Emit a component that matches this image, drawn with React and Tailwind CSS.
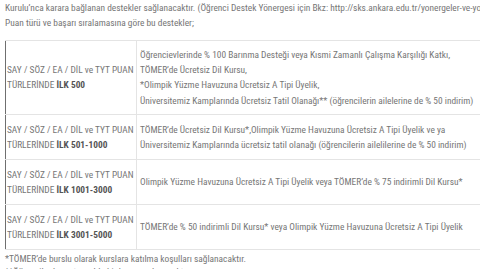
const rows = [
  {
    rank: "İLK 500",
    lines: [
      "Öğrencievlerinde % 100 Barınma Desteği veya Kısmi Zamanlı Çalışma Karşılığı Katkı,",
      "TÖMER’de Ücretsiz Dil Kursu,",
      "*Olimpik Yüzme Havuzuna Ücretsiz A Tipi Üyelik,",
      "Üniversitemiz Kamplarında Ücretsiz Tatil Olanağı** (öğrencilerin ailelerine de % 50 indirim)",
    ],
  },
  {
    rank: "İLK 501-1000",
    lines: [
      "TÖMER’de Ücretsiz Dil Kursu*,Olimpik Yüzme Havuzuna Ücretsiz A Tipi Üyelik ve ya",
      "Üniversitemiz Kamplarında ücretsiz tatil olanağı (öğrencilerin ailelilerine de % 50 indirim)",
    ],
  },
  {
    rank: "İLK 1001-3000",
    lines: [
      "Olimpik Yüzme Havuzuna Ücretsiz A Tipi Üyelik veya TÖMER’de % 75 indirimli Dil Kursu*",
    ],
  },
  {
    rank: "İLK 3001-5000",
    lines: [
      "TÖMER’de % 50 indirimli Dil Kursu* veya Olimpik Yüzme Havuzuna Ücretsiz A Tipi Üyelik",
    ],
  },
];

export default function App() {
  return (
    <div className="w-[480px] h-[269px] overflow-hidden bg-white">
      <div
        className="w-[700px] pl-[5px] text-[9.4px] leading-[15px] text-[#767676]"
        style={{ fontFamily: '"Roboto Condensed", Roboto, sans-serif' }}
      >
        <p className="h-[15px] whitespace-nowrap">
          Kurulu’nca karara bağlanan destekler sağlanacaktır. (Öğrenci Destek Yönergesi için Bkz: http://sks.ankara.edu.tr/yonergeler-ve-yonetmelikler)
        </p>
        <p className="h-[15px] whitespace-nowrap">Puan türü ve başarı sıralamasına göre bu destekler;</p>

        <table className="mt-[10px] w-[640px] border-collapse border border-[#6f6f6f]">
          <tbody>
            {rows.map((row) => (
              <tr key={row.rank}>
                <td className="w-[131px] border border-[#e4e4e4] border-l-[#6f6f6f] py-[7px] pl-[1px] pr-0 align-middle whitespace-nowrap">
                  <div className="h-[15px]">SAY / SÖZ / EA / DİL ve TYT PUAN</div>
                  <div className="h-[15px]">
                    TÜRLERİNDE <b className="font-bold text-[#555]">{row.rank}</b>
                  </div>
                </td>
                <td className="border border-[#e4e4e4] py-[6px] pl-[3px] align-middle whitespace-nowrap">
                  {row.lines.map((line, i) => (
                    <div key={i} className="h-[15.2px]">{line}</div>
                  ))}
                </td>
              </tr>
            ))}
          </tbody>
        </table>

        <p className="mt-[1px] h-[13px] whitespace-nowrap">*TÖMER’de burslu olarak kurslara katılma koşulları sağlanacaktır.</p>
        <p className="h-[13px] whitespace-nowrap">**Öğrenciler kamptan yılda bir kez yararlanacaktır.</p>
      </div>
    </div>
  );
}
